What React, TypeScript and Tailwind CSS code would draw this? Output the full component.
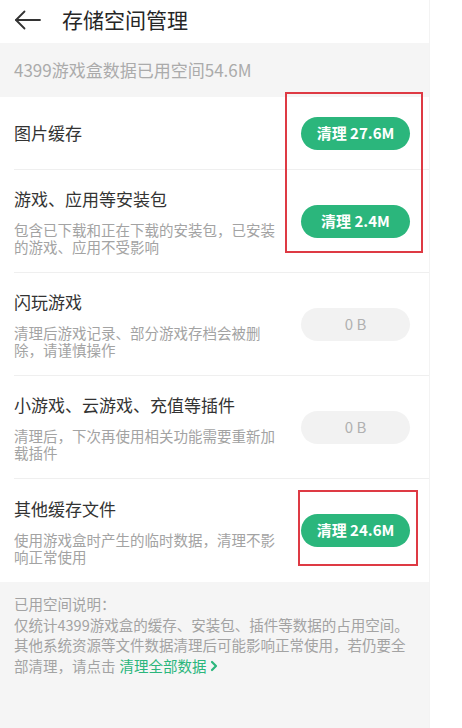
import type { ReactNode } from "react";

type Item = {
  title: string;
  desc?: string;
  size: string;
  active: boolean;
};

const ITEMS: Item[] = [
  { title: "图片缓存", size: "27.6M", active: true },
  {
    title: "游戏、应用等安装包",
    desc: "包含已下载和正在下载的安装包，已安装的游戏、应用不受影响",
    size: "2.4M",
    active: true,
  },
  {
    title: "闪玩游戏",
    desc: "清理后游戏记录、部分游戏存档会被删除，请谨慎操作",
    size: "0 B",
    active: false,
  },
  {
    title: "小游戏、云游戏、充值等插件",
    desc: "清理后，下次再使用相关功能需要重新加载插件",
    size: "0 B",
    active: false,
  },
  {
    title: "其他缓存文件",
    desc: "使用游戏盒时产生的临时数据，清理不影响正常使用",
    size: "24.6M",
    active: true,
  },
];

function CleanButton({ size, active }: { size: string; active: boolean }) {
  if (!active) {
    return (
      <div className="w-[109px] h-[33px] rounded-full bg-[#f2f2f2] flex items-center justify-center text-[15px] text-[#b0b0b0] shrink-0">
        {size}
      </div>
    );
  }
  return (
    <div className="w-[109px] h-[33px] rounded-full bg-[#2bb67c] flex items-center justify-center text-[15px] font-bold text-white shrink-0">
      清理 {size}
    </div>
  );
}

function Row({ item, last }: { item: Item; last: boolean }): ReactNode {
  return (
    <div
      className={`ml-[14px] pr-[19px] flex items-center justify-between ${
        item.desc ? "h-[103px]" : "h-[73px]"
      } ${last ? "" : "border-b border-[#efefef]"}`}
    >
      <div className="w-[268px]">
        <div className="text-[17px] leading-[24px] text-[#333]">{item.title}</div>
        {item.desc && (
          <div className="mt-[10px] text-[14.5px] leading-[17px] text-[#a3a3a3]">
            {item.desc}
          </div>
        )}
      </div>
      <CleanButton size={item.size} active={item.active} />
    </div>
  );
}

export default function App() {
  return (
    <div className="w-[462px] h-[728px] bg-white overflow-hidden font-['Noto_Sans_CJK_SC',sans-serif]">
      <div className="w-[430px] h-[728px] flex flex-col border-r border-[#f3f3f3]">
        {/* header */}
        <div className="h-[43px] shrink-0 flex items-center pl-[14px] pb-[3px]">
          <svg width="27" height="20" viewBox="0 0 27 20" fill="none" stroke="#333" strokeWidth="1.8" strokeLinecap="round" strokeLinejoin="round">
            <path d="M26 10H2" />
            <path d="M10.5 1.5L2 10l8.5 8.5" />
          </svg>
          <span className="ml-[21px] text-[21px] text-[#262626]">存储空间管理</span>
        </div>

        {/* summary */}
        <div className="h-[54px] shrink-0 bg-[#f5f5f5] px-[14px] flex items-center text-[17px] text-[#ababab]">
          4399游戏盒数据已用空间54.6M
        </div>

        {/* list */}
        <div className="relative shrink-0">
          {ITEMS.map((item, i) => (
            <Row key={i} item={item} last={i === ITEMS.length - 1} />
          ))}
          {/* annotation boxes */}
          <div className="absolute left-[285px] top-[-5px] w-[138px] h-[161px] border-2 border-[#de3a44]" />
          <div className="absolute left-[298px] top-[393px] w-[120px] h-[76px] border-2 border-[#de3a44]" />
        </div>

        {/* footer note */}
        <div className="flex-1 bg-[#f5f5f5] px-[14px] pt-[12px] text-[14.5px] leading-[20.6px] text-[#a3a3a3]">
          <div>已用空间说明：</div>
          <div>仅统计4399游戏盒的缓存、安装包、插件等数据的占用空间。</div>
          <div>其他系统资源等文件数据清理后可能影响正常使用，若仍要全</div>
          <div className="flex items-center">
            部清理，请点击
            <span className="ml-[4px] text-[#2bb67c]">清理全部数据</span>
            <svg className="ml-[3px]" width="8" height="12" viewBox="0 0 8 12" fill="none" stroke="#2bb67c" strokeWidth="2.2" strokeLinecap="round" strokeLinejoin="round">
              <path d="M2 2l4 4-4 4" />
            </svg>
          </div>
        </div>
      </div>
    </div>
  );
}
